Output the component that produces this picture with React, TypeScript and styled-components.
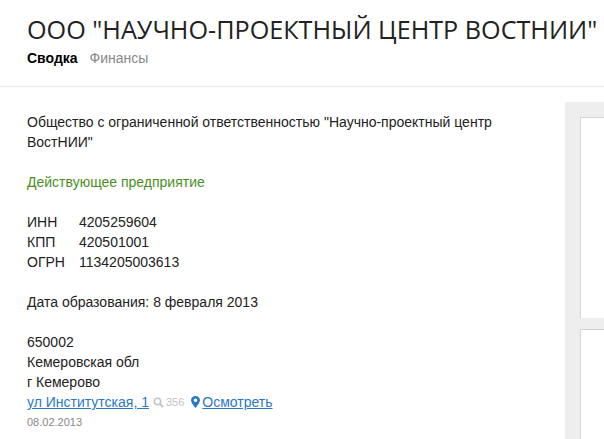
import React from 'react';
import styled, { createGlobalStyle } from 'styled-components';

const GlobalStyle = createGlobalStyle`
  html, body {
    margin: 0;
    padding: 0;
    height: 100%;
    overflow: hidden;
    background: #fff;
    font-family: "Liberation Sans", Arial, sans-serif;
    font-size: 14px;
    line-height: 20px;
    color: #222;
  }
`;

const Page = styled.div`
  width: 604px;
  height: 439px;
  overflow: hidden;
`;

const Header = styled.header`
  height: 86px;
  padding: 0 0 0 27px;
  border-bottom: 1px solid #e8e8e8;
  box-sizing: content-box;
  white-space: nowrap;
  overflow: hidden;
`;

const Title = styled.h1`
  margin: 0;
  padding-top: 11px;
  font-family: "Open Sans", sans-serif;
  font-weight: 400;
  font-size: 25.2px;
  line-height: 36px;
  color: #222;
`;

const Tabs = styled.nav`
  display: flex;
  gap: 12px;
  margin-top: 1px;
`;

const Tab = styled.span<{ $active?: boolean }>`
  font-weight: ${p => (p.$active ? 700 : 400)};
  color: ${p => (p.$active ? '#000' : '#888')};
`;

const Body = styled.div`
  display: flex;
  justify-content: space-between;
  padding-top: 15px;
`;

const Main = styled.main`
  width: 490px;
  padding: 10px 0 0 27px;
`;

const Block = styled.div`
  margin-bottom: 20px;
`;

const Status = styled(Block)`
  color: #4a8f1f;
`;

const CodeRow = styled.div`
  display: grid;
  grid-template-columns: 52px auto;
`;

const AddressLine = styled.div`
  display: flex;
  align-items: center;
`;

const Link = styled.a`
  color: #2d78c4;
  text-decoration: underline;
`;

const Views = styled.span`
  display: inline-flex;
  align-items: center;
  gap: 2px;
  margin: 0 7px 0 4px;
  font-size: 11px;
  color: #c4c4c4;
`;

const MapLink = styled.span`
  display: inline-flex;
  align-items: center;
  gap: 2px;
`;

const DateNote = styled.div`
  font-size: 11px;
  color: #888;
`;

const Sidebar = styled.aside`
  width: 24px;
  height: 400px;
  padding: 15px 0 0 15px;
  background: #eee;
  display: flex;
  flex-direction: column;
  gap: 11px;
`;

const Card = styled.div<{ $height: number }>`
  height: ${p => p.$height}px;
  background: #fff;
  border-top: 1px solid #d4d4d4;
  border-left: 1px solid #d4d4d4;
  flex-shrink: 0;
`;

const codes = [
  ['ИНН', '4205259604'],
  ['КПП', '420501001'],
  ['ОГРН', '1134205003613'],
];

const App: React.FC = () => (
  <Page>
    <GlobalStyle />
    <Header>
      <Title>ООО "НАУЧНО-ПРОЕКТНЫЙ ЦЕНТР ВОСТНИИ"</Title>
      <Tabs>
        <Tab $active>Сводка</Tab>
        <Tab>Финансы</Tab>
      </Tabs>
    </Header>
    <Body>
      <Main>
        <Block>
          Общество с ограниченной ответственностью "Научно-проектный центр ВостНИИ"
        </Block>
        <Status>Действующее предприятие</Status>
        <Block>
          {codes.map(([label, value]) => (
            <CodeRow key={label}>
              <span>{label}</span>
              <span>{value}</span>
            </CodeRow>
          ))}
        </Block>
        <Block>Дата образования: 8 февраля 2013</Block>
        <div>650002</div>
        <div>Кемеровская обл</div>
        <div>г Кемерово</div>
        <AddressLine>
          <Link>ул Институтская, 1</Link>
          <Views>
            <svg width="11" height="11" viewBox="0 0 11 11" fill="none" stroke="#c4c4c4">
              <circle cx="4.5" cy="4.5" r="3.2" strokeWidth="1.5" />
              <path d="M7 7l3 3" strokeWidth="2" />
            </svg>
            356
          </Views>
          <MapLink>
            <svg width="9" height="12" viewBox="0 0 9 12">
              <path
                fillRule="evenodd"
                fill="#2d78c4"
                d="M4.5 0C2 0 0 1.9 0 4.3 0 7 4.5 12 4.5 12S9 7 9 4.3C9 1.9 7 0 4.5 0zm0 6a1.8 1.8 0 1 1 0-3.6 1.8 1.8 0 0 1 0 3.6z"
              />
            </svg>
            <Link>Осмотреть</Link>
          </MapLink>
        </AddressLine>
        <DateNote>08.02.2013</DateNote>
      </Main>
      <Sidebar>
        <Card $height={200} />
        <Card $height={200} />
      </Sidebar>
    </Body>
  </Page>
);

export default App;
